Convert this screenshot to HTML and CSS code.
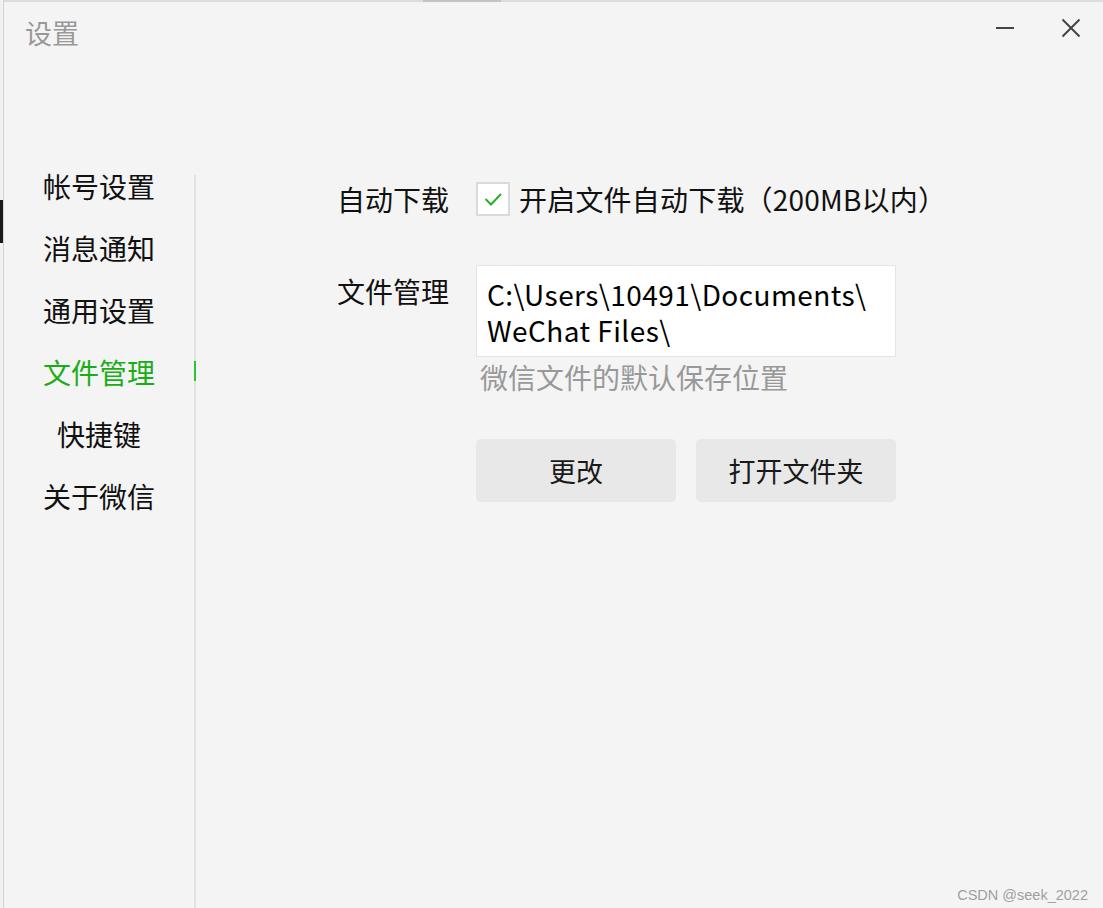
FILE: index.html
```html
<!DOCTYPE html>
<html><head>
<meta charset="utf-8">
<link rel="stylesheet" href="styles.css">
</head>
<body>

<div class="edge-shadow"></div>
<div class="window">
  <div class="top-strip"><span class="top-thumb"></span></div>

  <div class="titlebar">
    <span class="title">设置</span>
    <div class="win-controls">
      <button class="win-btn" title="最小化">
        <svg width="20" height="20" viewBox="0 0 20 20"><line x1="1" y1="10" x2="19" y2="10" stroke="#444" stroke-width="2"/></svg>
      </button>
      <button class="win-btn" title="关闭">
        <svg width="20" height="20" viewBox="0 0 20 20"><path d="M1.5 1.5 L18.5 18.5 M18.5 1.5 L1.5 18.5" stroke="#444" stroke-width="2" fill="none"/></svg>
      </button>
    </div>
  </div>

  <div class="main">
    <ul class="nav">
      <li>帐号设置</li>
      <li>消息通知</li>
      <li>通用设置</li>
      <li class="active">文件管理</li>
      <li>快捷键</li>
      <li>关于微信</li>
    </ul>
    <div class="divider"></div>

    <div class="content">
      <div class="label label-check">自动下载</div>
      <label class="check-row">
        <span class="checkbox">
          <svg width="20" height="20" viewBox="0 0 20 20"><path d="M2.5 10 L8 15.5 L18 5" stroke="#2aae2a" stroke-width="2" fill="none"/></svg>
        </span>
        <span class="check-text">开启文件自动下载（200MB以内）</span>
      </label>

      <div class="label label-path">文件管理</div>
      <div class="path-field">
        <div class="path-box">C:\Users\10491\Documents\<br>WeChat Files\</div>
        <div class="hint">微信文件的默认保存位置</div>
        <div class="actions">
          <button class="btn">更改</button>
          <button class="btn">打开文件夹</button>
        </div>
      </div>
    </div>
  </div>
</div>

<div class="watermark">CSDN @seek_2022</div>

</body>
</html>
```

FILE: styles.css
```css
/* page / window frame */
html, body {
  margin: 0;
  height: 100%;
}
body {
  background: #f2f2f2;
  font-family: "Noto Sans CJK SC", "Noto Sans", sans-serif;
  color: #111;
  overflow: hidden;
}

.edge-shadow {
  position: absolute;
  left: 0;
  top: 200px;
  width: 3px;
  height: 43px;
  background: #1a1a1a;
}

.window {
  margin-left: 3px;
  height: 100%;
  background: #f4f4f4;
  border-left: 1px solid #d4d4d4;
  display: flex;
  flex-direction: column;
}

.top-strip {
  height: 2px;
  background: #dcdcdc;
  display: flex;
}
.top-thumb {
  margin-left: 419px;
  width: 78px;
  background: #c4c4c4;
}

/* title bar */
.titlebar {
  display: flex;
  justify-content: space-between;
  align-items: flex-start;
  padding: 13px 22px 0 21px;
  height: 140px;
}
.title {
  font-size: 27px;
  line-height: 36px;
  color: #999;
}
.win-controls {
  display: flex;
  gap: 46px;
  padding-top: 3px;
}
.win-btn {
  border: none;
  background: none;
  padding: 0;
  width: 20px;
  height: 20px;
  cursor: pointer;
}

/* sidebar */
.main {
  flex: 1;
  display: flex;
}
.nav {
  list-style: none;
  margin: 0;
  padding: 0;
  width: 190px;
}
.nav li {
  position: relative;
  text-align: center;
  font-size: 28px;
  line-height: 62px;
  color: #111;
  cursor: pointer;
}
.nav li.active {
  color: #1aad19;
}
.nav li.active::after {
  content: '';
  position: absolute;
  right: -2px;
  top: 20px;
  width: 2px;
  height: 20px;
  background: #2cc62c;
}
.divider {
  width: 2px;
  margin-top: 20px;
  background: #e2e2e2;
}

/* right pane */
.content {
  display: grid;
  grid-template-columns: 139px 420px;
  grid-auto-rows: min-content;
  row-gap: 48px;
  padding: 26px 0 0 141px;
  font-size: 28px;
}

.label {
  white-space: nowrap;
}
.label-check {
  line-height: 36px;
}
.label-path {
  line-height: 36px;
  padding-top: 8px;
}

.check-row {
  display: flex;
  align-items: center;
  gap: 9px;
  white-space: nowrap;
  line-height: 36px;
}
.checkbox {
  flex: none;
  box-sizing: border-box;
  width: 34px;
  height: 34px;
  border: 2px solid #dadada;
  background: #fff;
  display: flex;
  align-items: center;
  justify-content: center;
}
.check-text {
  letter-spacing: 0.2px;
}

.path-box {
  background: #fff;
  border: 1px solid #e4e4e4;
  padding: 10px 10px 8px;
  line-height: 36px;
  color: #000;
  letter-spacing: 0.45px;
}
.hint {
  color: #999;
  line-height: 40px;
  padding-left: 4px;
}

.actions {
  display: flex;
  gap: 20px;
  margin-top: 42px;
}
.btn {
  width: 200px;
  height: 63px;
  border: none;
  border-radius: 5px;
  background: #e8e8e8;
  font-family: inherit;
  font-size: 27px;
  color: #1a1a1a;
  cursor: pointer;
}

.watermark {
  position: absolute;
  right: 15px;
  bottom: 5px;
  font-family: "Liberation Sans", Arial, sans-serif;
  font-size: 14.5px;
  color: #a0a0a0;
}
```
